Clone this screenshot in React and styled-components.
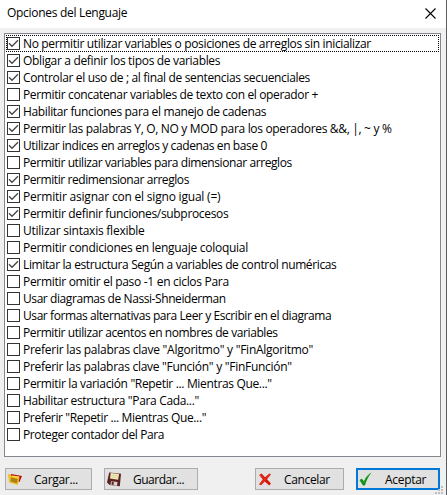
import React from 'react';
import styled, { createGlobalStyle } from 'styled-components';

const GlobalStyle = createGlobalStyle`
  * { box-sizing: border-box; }
  body { margin: 0; overflow: hidden; background: #f0f0f0; }
`;

const Dialog = styled.main`
  position: relative;
  display: flex;
  flex-direction: column;
  width: 447px;
  height: 495px;
  border-right: 1px solid #5c5c5e;
  background: #f0f0f0;
  color: #000;
  font: 12px/17px 'Open Sans', 'Noto Sans', sans-serif;
`;

const TitleBar = styled.header`
  display: flex;
  align-items: center;
  justify-content: space-between;
  height: 28px;
  padding: 0 10px 3px 7px;
  background: #fff;
`;

const Title = styled.h1`
  margin: 0;
  font: inherit;
  letter-spacing: -0.3px;
`;

const CloseButton = styled.button`
  display: flex;
  padding: 0;
  margin-top: 1px;
  border: 0;
  background: none;
`;

const OptionList = styled.ul`
  width: 437px;
  height: 424px;
  margin: 5px 0 0 4px;
  padding: 1px;
  list-style: none;
  border: 1px solid #828790;
  background: #fff;
`;

const Option = styled.li`
  display: flex;
  align-items: flex-start;
  gap: 3px;
  height: 17px;
  padding-left: 1px;
  outline: ${(p) => (p.$focused ? '1px dotted #000' : 'none')};
  outline-offset: -1px;
  white-space: pre;
`;

const Box = styled.span`
  display: flex;
  flex: none;
  width: 13px;
  height: 13px;
  margin-top: 2px;
  border: 1px solid #333;
  background: #fff;
`;

const Label = styled.span`
  letter-spacing: ${(p) => p.$tracking}px;
`;

const Footer = styled.footer`
  display: flex;
  margin: 11px 0 0 5px;
`;

const Button = styled.button`
  display: flex;
  align-items: center;
  width: ${(p) => p.$width}px;
  height: 22px;
  margin: 0 0 0 ${(p) => p.$gap || 0}px;
  padding: 0;
  border: ${(p) => (p.$primary ? '2px solid #0078d7' : '1px solid #adadad')};
  background: #e1e1e1;
  color: #000;
  font: inherit;
`;

const ButtonIcon = styled.svg`
  flex: none;
  width: 16px;
  height: 16px;
  margin-left: ${(p) => p.$left}px;
`;

const ButtonText = styled.span`
  margin-left: 11px;
  letter-spacing: ${(p) => p.$tracking}px;
`;

const Grip = styled.svg`
  position: absolute;
  right: 3px;
  bottom: 0;
`;

const OPTIONS = [
  ['No permitir utilizar variables o posiciones de arreglos sin inicializar', true, -0.34],
  ['Obligar a definir los tipos de variables', true, -0.33],
  ['Controlar el uso de ; al final de sentencias secuenciales', true, -0.34],
  ['Permitir concatenar variables de texto con el operador +', false, -0.36],
  ['Habilitar funciones para el manejo de cadenas', true, -0.35],
  ['Permitir las palabras Y, O, NO y MOD para los operadores &&, |, ~ y %', true, -0.32],
  ['Utilizar indices en arreglos y cadenas en base 0', true, -0.39],
  ['Permitir utilizar variables para dimensionar arreglos', false, -0.41],
  ['Permitir redimensionar arreglos', true, -0.43],
  ['Permitir asignar con el signo igual (=)', true, -0.2],
  ['Permitir definir funciones/subprocesos', true, -0.33],
  ['Utilizar sintaxis flexible', false, -0.24],
  ['Permitir condiciones en lenguaje coloquial', false, -0.27],
  ['Limitar la estructura Según a variables de control numéricas', true, -0.37],
  ['Permitir omitir el paso -1 en ciclos Para', false, -0.3],
  ['Usar diagramas de Nassi-Shneiderman', false, -0.42],
  ['Usar formas alternativas para Leer y Escribir en el diagrama', false, -0.42],
  ['Permitir utilizar acentos en nombres de variables', false, -0.4],
  ['Preferir las palabras clave "Algoritmo" y "FinAlgoritmo"', false, -0.26],
  ['Preferir las palabras clave "Función" y "FinFunción"', false, -0.28],
  ['Permitir la variación "Repetir ... Mientras Que..."', false, -0.34],
  ['Habilitar estructura "Para Cada..."', false, -0.34],
  ['Preferir "Repetir ... Mientras Que..."', false, -0.36],
  ['Proteger contador del Para', false, -0.39],
];

const CheckMark = () => (
  <svg width="11" height="11" viewBox="0 0 11 11">
    <path d="M1 5.3 4 8.3 10 2.3" fill="none" stroke="#444" strokeWidth="1.3" />
  </svg>
);

const FolderIcon = () => (
  <ButtonIcon $left={1} viewBox="0 0 16 16">
    <path d="M4 3 15 5 12.5 11 3 9Z" fill="#b80f12" />
    <path d="M5 4.5 12.5 5.5 11 11 3 9Z" fill="#ffe14a" />
    <path d="M1 3 4 3.8 5 5.5 12.5 7.2 10.8 14 2.2 11.5Z" fill="#f2bd20" />
    <path d="M4 6.5 11 8 9.8 12.3 3.5 10.5Z" fill="#a88418" />
  </ButtonIcon>
);

const DiskIcon = () => (
  <ButtonIcon $left={1} viewBox="0 0 16 16">
    <path d="M3.2 1.5 15 2.8 13.8 15.2 3.7 14 1 11.5Z" fill="#5c2020" />
    <path d="M4.7 2 13 3 12.2 8.8 4 7.5Z" fill="#f3f0bd" />
    <path d="M5.2 4 12 4.8M5 6 11.8 6.8" stroke="#c8c78f" strokeWidth=".7" />
    <path d="M5 10.2 11.5 11 11 14.8 4.5 14Z" fill="#d8d4d4" />
    <path d="M5.8 10.8 7.8 11 7.5 14 5.5 13.7Z" fill="#5c2020" />
  </ButtonIcon>
);

const CrossIcon = () => (
  <ButtonIcon $left={1} viewBox="0 0 16 16">
    <path d="M2.2 4 4.5 2.5 8 6.2 12.5 2.5 14 3.2 10 8.2 14 12.5 12.2 14.5 7.8 10.5 4 14.2 2 13.2 5.8 8.5Z" fill="#d91608" />
    <path d="M3 4 8 8.5 12.8 3.3M3 13.2 7.8 8.8" fill="none" stroke="#f34b32" strokeWidth=".7" />
  </ButtonIcon>
);

const AcceptIcon = () => (
  <ButtonIcon $left={0} viewBox="0 0 16 16">
    <path d="M1.5 9 3.8 7.7 6 10.3C7.5 6.5 9.7 3.5 13.5 1.5 10.7 5 8.5 9.2 7 14.2L5 14.5Z" fill="#078c13" />
    <path d="M2.5 9 5.8 12.3C7.2 8.5 9 5.5 12 3" fill="none" stroke="#24b42b" strokeWidth=".8" />
  </ButtonIcon>
);

export default function App() {
  return (
    <>
      <GlobalStyle />
      <Dialog>
        <TitleBar>
          <Title>Opciones del Lenguaje</Title>
          <CloseButton aria-label="Cerrar">
            <svg width="11" height="11" viewBox="0 0 11 11">
              <path d="M.5.5 10.5 10.5M10.5.5.5 10.5" stroke="#000" strokeWidth="1.1" />
            </svg>
          </CloseButton>
        </TitleBar>
        <OptionList>
          {OPTIONS.map(([text, checked, tracking], i) => (
            <Option key={text} $focused={i === 0}>
              <Box>{checked && <CheckMark />}</Box>
              <Label $tracking={tracking}>{text}</Label>
            </Option>
          ))}
        </OptionList>
        <Footer>
          <Button $width={87}><FolderIcon /><ButtonText $tracking={-0.3}>Cargar...</ButtonText></Button>
          <Button $width={94} $gap={12}><DiskIcon /><ButtonText $tracking={-0.5}>Guardar...</ButtonText></Button>
          <Button $width={89} $gap={57}><CrossIcon /><ButtonText $tracking={-0.35}>Cancelar</ButtonText></Button>
          <Button $width={84} $gap={12} $primary><AcceptIcon /><ButtonText $tracking={-0.3}>Aceptar</ButtonText></Button>
        </Footer>
        <Grip width="8" height="9" viewBox="0 0 8 9">
          <path d="M6 0h2v2H6zM3 3h2v2H3zM6 3h2v2H6zM0 6h2v2H0zM3 6h2v2H3zM6 6h2v2H6z" fill="#bfbfbf" />
        </Grip>
      </Dialog>
    </>
  );
}
